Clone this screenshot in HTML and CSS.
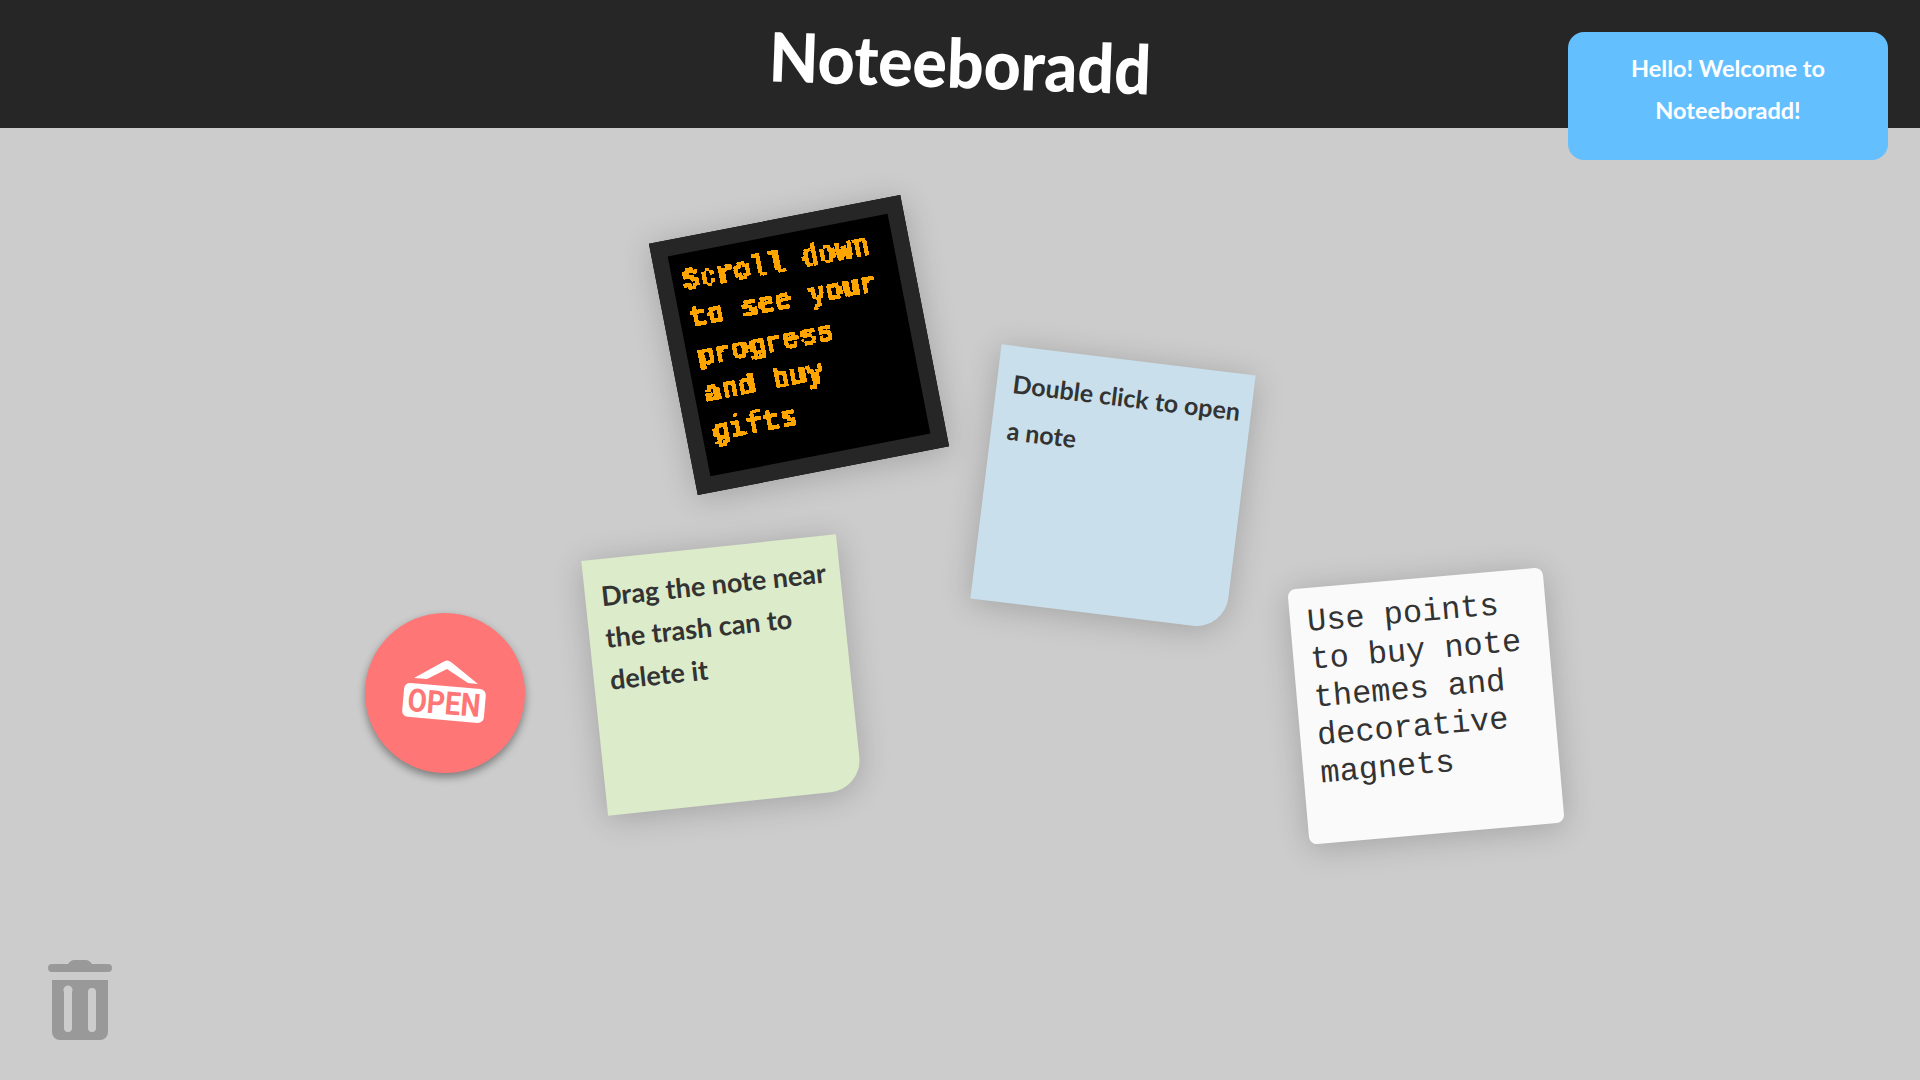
FILE: index.html
```html
<!DOCTYPE html>
<html lang="en">
<head>
<meta charset="utf-8">
<title>Noteeboradd</title>
<link rel="stylesheet" href="styles.css">
</head>
<body>
<svg class="defs" width="0" height="0" aria-hidden="true">
  <filter id="pixelate" x="0" y="0" width="100%" height="100%" color-interpolation-filters="sRGB">
    <feFlood x="1" y="1" width="2" height="2" flood-color="#000"/>
    <feComposite width="4" height="4"/>
    <feTile result="grid"/>
    <feComposite in="SourceGraphic" in2="grid" operator="in"/>
    <feMorphology operator="dilate" radius="1"/>
    <feComponentTransfer>
      <feFuncA type="discrete" tableValues="0 1 1"/>
    </feComponentTransfer>
  </filter>
</svg>
<header class="topbar">
  <h1 class="title">Noteeboradd</h1>
  <div class="welcome">Hello! Welcome to Noteeboradd!</div>
</header>
<main class="board">
  <article class="note note-pixel"><p class="pixel-text">Scroll down to see your progress and buy gifts</p></article>
  <article class="note note-blue">Double click to open a note</article>
  <article class="note note-green">Drag the note near the trash can to delete it</article>
  <article class="note note-white">Use points to buy note themes and decorative magnets</article>
  <button class="open-btn" type="button" aria-label="Open">
    <svg class="open-icon" viewBox="0 0 160 160" width="160" height="160">
      <path class="open-hanger" d="M49 65 L78 49 Q82 46 86 49 L113 71 L103 70 L82 56 L62 66 Z"/>
      <g transform="rotate(5 80 90)">
        <rect class="open-sign" x="38" y="73" width="82" height="34" rx="6"/>
        <text class="open-text" x="79" y="101" text-anchor="middle" textLength="73" lengthAdjust="spacingAndGlyphs">OPEN</text>
      </g>
    </svg>
  </button>
  <svg class="trash" viewBox="0 0 64 80" width="64" height="80" aria-label="Trash">
    <path class="trash-shape" fill-rule="evenodd" d="M4 4 H20 Q23 0 26 0 H38 Q41 0 44 4 H60 A4 4 0 0 1 60 12 H4 A4 4 0 0 1 4 4 Z M4 20 H60 V72 A8 8 0 0 1 52 80 H12 A8 8 0 0 1 4 72 Z M16 28 A4 4 0 0 1 24 32 V68 A4 4 0 0 1 16 68 V32 A4 4 0 0 1 16 28 Z M40 32 A4 4 0 0 1 48 32 V68 A4 4 0 0 1 40 68 Z"/>
  </svg>
</main>
</body>
</html>
```
FILE: styles.css
```css
* { box-sizing: border-box; }
html, body { margin: 0; height: 100%; overflow: hidden; }
body { background: #cccccc; font-family: "Lato", "Noto Sans", sans-serif; color: #333; display: flex; flex-direction: column; }
.defs { position: absolute; }

.topbar { position: relative; height: 128px; flex: none; background: #262626; display: flex; align-items: center; justify-content: center; }
.title { margin: 0; color: #fff; font-size: 68px; font-weight: 900; line-height: 1; transform: rotate(2deg) scaleX(.945); position: relative; top: -2px; }
.welcome { position: absolute; top: 32px; right: 32px; width: 320px; height: 128px; padding: 15px 48px; border-radius: 16px; background: #64bfff; color: #fff; font-size: 23.5px; font-weight: 700; line-height: 42px; text-align: center; z-index: 2; }

.board { position: relative; flex: 1; }
.note { position: absolute; width: 256px; height: 256px; padding: 16px 8px 16px 16px; box-shadow: 0 4px 32px rgba(0,0,0,.2); font-weight: 700; font-size: 27px; }
.note-pixel { left: 670.5px; top: 88.5px; transform: rotate(-11deg); background: #000; border: 16px solid #262626; padding: 10px 8px 10px 10px; }
.pixel-text { margin: 0; color: #ffa500; font-family: "Liberation Mono", monospace; font-size: 28.8px; line-height: 38.4px; filter: url(#pixelate); }
.note-blue { left: 985px; top: 231px; transform: rotate(7deg); background: #c9e0ec; border-bottom-right-radius: 32px; font-size: 25px; line-height: 47px; padding-top: 14px; }
.note-green { left: 593.5px; top: 418.5px; transform: rotate(-6deg); background: #dcebc9; border-bottom-right-radius: 32px; line-height: 42px; }
.note-white { left: 1298px; top: 450px; transform: rotate(-5deg); background: #fafafa; border-radius: 8px; padding-left: 17px; font-family: "Liberation Mono", monospace; font-weight: 400; font-size: 32px; line-height: 38px; }

.open-btn { position: absolute; left: 365px; top: 485px; width: 160px; height: 160px; padding: 0; border: 0; border-radius: 50%; background: #ff7676; box-shadow: 0 4px 8px rgba(0,0,0,.4); }
.open-icon { display: block; }
.open-hanger, .open-sign { fill: #fff; }
.open-text { fill: #ff7676; font-family: "Roboto", sans-serif; font-weight: 700; font-size: 32px; }

.trash { position: absolute; left: 48px; bottom: 40px; display: block; }
.trash-shape { fill: #999; }
```
